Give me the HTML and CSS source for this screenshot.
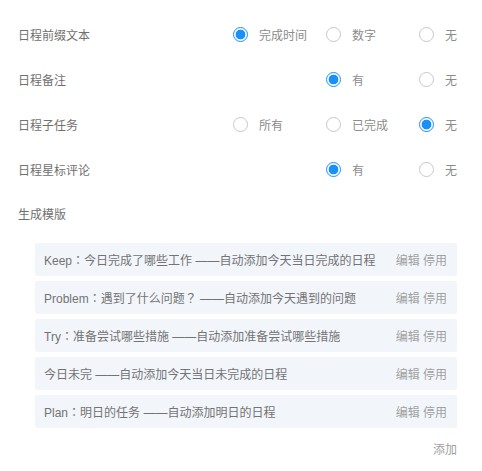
FILE: index.html
```html
<!DOCTYPE html>
<html lang="zh-CN">
    <head>
        <meta charset="UTF-8" />
        <meta name="viewport" content="width=device-width, initial-scale=1.0" />
        <title>日程设置</title>
        <link rel="stylesheet" href="styles.css">
    </head>
    <body>
        <main class="settings">
            <div class="row">
                <span class="label">日程前缀文本</span>
                <div class="options">
                    <label class="option"><input type="radio" name="prefix" checked /><span>完成时间</span></label>
                    <label class="option"><input type="radio" name="prefix" /><span>数字</span></label>
                    <label class="option"><input type="radio" name="prefix" /><span>无</span></label>
                </div>
            </div>
            <div class="row">
                <span class="label">日程备注</span>
                <div class="options">
                    <label class="option col-2"><input type="radio" name="note" checked /><span>有</span></label>
                    <label class="option"><input type="radio" name="note" /><span>无</span></label>
                </div>
            </div>
            <div class="row">
                <span class="label">日程子任务</span>
                <div class="options">
                    <label class="option"><input type="radio" name="subtask" /><span>所有</span></label>
                    <label class="option"><input type="radio" name="subtask" /><span>已完成</span></label>
                    <label class="option"><input type="radio" name="subtask" checked /><span>无</span></label>
                </div>
            </div>
            <div class="row">
                <span class="label">日程星标评论</span>
                <div class="options">
                    <label class="option col-2"><input type="radio" name="star" checked /><span>有</span></label>
                    <label class="option"><input type="radio" name="star" /><span>无</span></label>
                </div>
            </div>
            <div class="row row-short">
                <span class="label">生成模版</span>
            </div>
            <ul class="templates">
                <li class="template">
                    <span class="template-text">Keep<span class="colon" lang="zh-TW">：</span>今日完成了哪些工作 ——自动添加今天当日完成的日程</span>
                    <span class="actions"><a>编辑</a> <a>停用</a></span>
                </li>
                <li class="template">
                    <span class="template-text">Problem<span class="colon" lang="zh-TW">：</span>遇到了什么问题<span class="colon" lang="zh-TW">？</span> ——自动添加今天遇到的问题</span>
                    <span class="actions"><a>编辑</a> <a>停用</a></span>
                </li>
                <li class="template">
                    <span class="template-text">Try<span class="colon" lang="zh-TW">：</span>准备尝试哪些措施 ——自动添加准备尝试哪些措施</span>
                    <span class="actions"><a>编辑</a> <a>停用</a></span>
                </li>
                <li class="template">
                    <span class="template-text">今日未完 ——自动添加今天当日未完成的日程</span>
                    <span class="actions"><a>编辑</a> <a>停用</a></span>
                </li>
                <li class="template">
                    <span class="template-text">Plan<span class="colon" lang="zh-TW">：</span>明日的任务 ——自动添加明日的日程</span>
                    <span class="actions"><a>编辑</a> <a>停用</a></span>
                </li>
            </ul>
            <div class="footer">
                <a class="add">添加</a>
            </div>
        </main>
    </body>
</html>
```

FILE: styles.css
```css
* {
    box-sizing: border-box;
}
body {
    margin: 0;
    background-color: #fff;
    color: #777;
    font-family: "Liberation Sans", "Noto Sans CJK SC", sans-serif;
    font-size: 12px;
}
.settings {
    padding: 12px 25px 0 18px;
}
.row {
    display: flex;
    align-items: center;
    justify-content: space-between;
    height: 45px;
}
.row-short {
    height: 42px;
}
.label {
    color: #707070;
}
.options {
    display: grid;
    grid-template-columns: 93px 93px 38px;
    align-items: center;
}
.option {
    display: flex;
    align-items: center;
    color: #8c8c8c;
    cursor: pointer;
}
.col-2 {
    grid-column: 2;
}
.option input {
    appearance: none;
    -webkit-appearance: none;
    margin: 0 11px 0 0;
    width: 15px;
    height: 15px;
    border: 1px solid #c8c8c8;
    border-radius: 50%;
    background-color: #fff;
    flex-shrink: 0;
}
.option input:checked {
    border-color: #1890ff;
    background: radial-gradient(circle, #1890ff 0 4.6px, #fff 5.2px);
}
.templates {
    list-style: none;
    margin: 9px 0 0 17px;
    padding: 0;
}
.template {
    display: flex;
    align-items: center;
    justify-content: space-between;
    height: 33px;
    margin-bottom: 5px;
    padding: 0 10px 0 9px;
    background-color: #f2f6fb;
    border-radius: 2px;
    color: #737373;
}
.colon {
    font-family: "Noto Sans CJK TC", "Noto Sans CJK JP", sans-serif;
}
.actions {
    color: #a0a0a0;
}
.actions a {
    cursor: pointer;
}
.footer {
    display: flex;
    justify-content: flex-end;
    margin-top: 12px;
}
.add {
    color: #a0a0a0;
    cursor: pointer;
}
```
